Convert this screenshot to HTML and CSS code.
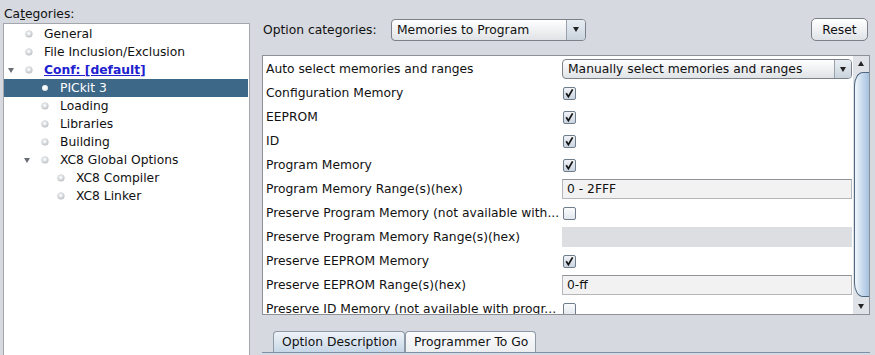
FILE: index.html
```html
<!DOCTYPE html>
<html lang="en">
<head>
    <meta charset="UTF-8">
    <meta name="viewport" content="width=device-width, initial-scale=1.0">
    <title>Project Properties</title>
    <link rel="stylesheet" href="styles.css">
</head>
<body>
    <div class="window">
        <!-- Categories tree -->
        <div class="left-pane">
            <div class="cat-label">Ca<u>t</u>egories:</div>
            <div class="tree">
                <div class="node lvl1"><span class="toggle"></span><span class="bullet"></span><span class="name">General</span></div>
                <div class="node lvl1"><span class="toggle"></span><span class="bullet"></span><span class="name">File Inclusion/Exclusion</span></div>
                <div class="node lvl1"><span class="toggle open"></span><span class="bullet"></span><span class="name link">Conf: [default]</span></div>
                <div class="node lvl2 selected"><span class="toggle"></span><span class="bullet"></span><span class="name">PICkit 3</span></div>
                <div class="node lvl2"><span class="toggle"></span><span class="bullet"></span><span class="name">Loading</span></div>
                <div class="node lvl2"><span class="toggle"></span><span class="bullet"></span><span class="name">Libraries</span></div>
                <div class="node lvl2"><span class="toggle"></span><span class="bullet"></span><span class="name">Building</span></div>
                <div class="node lvl2"><span class="toggle open"></span><span class="bullet"></span><span class="name">XC8 Global Options</span></div>
                <div class="node lvl3"><span class="toggle"></span><span class="bullet"></span><span class="name">XC8 Compiler</span></div>
                <div class="node lvl3"><span class="toggle"></span><span class="bullet"></span><span class="name">XC8 Linker</span></div>
            </div>
        </div>

        <!-- Options -->
        <div class="right-pane">
            <div class="top-bar">
                <span class="opt-label">Option categories:</span>
                <div class="combo cat-combo">
                    <span class="combo-text">Memories to Program</span>
                    <span class="combo-btn"><i class="arrow-down"></i></span>
                </div>
                <button class="reset-btn">Reset</button>
            </div>

            <div class="options">
                <div class="rows">
                    <div class="row">
                        <div class="label">Auto select memories and ranges</div>
                        <div class="value">
                            <div class="combo row-combo">
                                <span class="combo-text">Manually select memories and ranges</span>
                                <span class="combo-btn"><i class="arrow-down"></i></span>
                            </div>
                        </div>
                    </div>
                    <div class="row">
                        <div class="label">Configuration Memory</div>
                        <div class="value"><span class="check checked"><svg viewBox="0 0 13 13"><path d="M2.6 6.2 L5.2 10.2 L10.2 1.6"/></svg></span></div>
                    </div>
                    <div class="row">
                        <div class="label">EEPROM</div>
                        <div class="value"><span class="check checked"><svg viewBox="0 0 13 13"><path d="M2.6 6.2 L5.2 10.2 L10.2 1.6"/></svg></span></div>
                    </div>
                    <div class="row">
                        <div class="label">ID</div>
                        <div class="value"><span class="check checked"><svg viewBox="0 0 13 13"><path d="M2.6 6.2 L5.2 10.2 L10.2 1.6"/></svg></span></div>
                    </div>
                    <div class="row">
                        <div class="label">Program Memory</div>
                        <div class="value"><span class="check checked"><svg viewBox="0 0 13 13"><path d="M2.6 6.2 L5.2 10.2 L10.2 1.6"/></svg></span></div>
                    </div>
                    <div class="row">
                        <div class="label">Program Memory Range(s)(hex)</div>
                        <div class="value"><div class="field">0 - 2FFF</div></div>
                    </div>
                    <div class="row">
                        <div class="label">Preserve Program Memory (not available with...</div>
                        <div class="value"><span class="check"></span></div>
                    </div>
                    <div class="row">
                        <div class="label">Preserve Program Memory Range(s)(hex)</div>
                        <div class="value"><div class="field disabled"></div></div>
                    </div>
                    <div class="row">
                        <div class="label">Preserve EEPROM Memory</div>
                        <div class="value"><span class="check checked"><svg viewBox="0 0 13 13"><path d="M2.6 6.2 L5.2 10.2 L10.2 1.6"/></svg></span></div>
                    </div>
                    <div class="row">
                        <div class="label">Preserve EEPROM Range(s)(hex)</div>
                        <div class="value"><div class="field">0-ff</div></div>
                    </div>
                    <div class="row">
                        <div class="label">Preserve ID Memory (not available with progr...</div>
                        <div class="value"><span class="check"></span></div>
                    </div>
                </div>
                <div class="scrollbar">
                    <div class="sb-btn"><i class="arrow-up"></i></div>
                    <div class="sb-track"><div class="sb-thumb"></div></div>
                    <div class="sb-btn"><i class="arrow-down"></i></div>
                </div>
            </div>

            <div class="tabs">
                <div class="tab active">Option Description</div>
                <div class="tab">Programmer To Go</div>
            </div>
        </div>
    </div>
</body>
</html>
```

FILE: styles.css
```css
body {
    margin: 0;
    padding: 0;
    background: #d6d9df;
    font-family: "DejaVu Sans", Verdana, sans-serif;
    font-size: 12.3px;
    color: #111;
    overflow: hidden;
}

.window {
    display: flex;
    height: 355px;
    overflow: hidden;
}

/* Left pane */
.left-pane {
    width: 250px;
    padding-left: 3px;
    box-sizing: border-box;
    flex-shrink: 0;
    display: flex;
    flex-direction: column;
}

.cat-label {
    padding: 6px 0 0 1px;
    line-height: 16px;
    height: 16px;
}

.cat-label u {
    text-decoration-thickness: 1px;
}

.tree {
    margin-top: 1px;
    flex: 1;
    background: #fff;
    border: 1px solid #a3a6ab;
    border-bottom: none;
    padding-top: 1px;
}

.node {
    display: flex;
    align-items: center;
    height: 18px;
    margin-right: 1px;
}

.node.lvl2 { padding-left: 16px; }
.node.lvl3 { padding-left: 32px; }

.toggle {
    width: 13px;
    display: flex;
    justify-content: center;
    align-items: center;
    flex-shrink: 0;
}

.toggle.open::before {
    content: "";
    border-left: 3px solid transparent;
    border-right: 3px solid transparent;
    border-top: 5px solid #6a6e75;
    margin-top: 1px;
}

.bullet {
    width: 6px;
    height: 6px;
    margin-left: 9px;
    border-radius: 50%;
    background: radial-gradient(circle at 45% 40%, #ffffff 0, #e6e8ea 35%, #9ca1a7 100%);
    box-shadow: 0 0 0 0.5px #b5b9be;
    flex-shrink: 0;
}

.name {
    margin-left: 12px;
    white-space: nowrap;
}

.name.link {
    color: #2020d0;
    font-weight: bold;
    text-decoration: underline;
}

.node.selected {
    background: #3d6887;
    color: #fff;
}

.node.selected .bullet {
    background: radial-gradient(circle at 45% 40%, #ffffff 0, #f0f2f4 50%, #c6ccd2 100%);
    box-shadow: none;
}

/* Right pane */
.right-pane {
    flex: 1;
    padding: 0 5px 0 12px;
    display: flex;
    flex-direction: column;
}

.top-bar {
    display: flex;
    align-items: center;
    margin-top: 18px;
    height: 23px;
}

.opt-label {
    width: 129px;
    padding-left: 1px;
    box-sizing: border-box;
}

.combo {
    display: flex;
    align-items: stretch;
    border: 1px solid #7c8189;
    border-radius: 4px;
    background: linear-gradient(#ffffff, #eceef0 60%, #e0e3e6);
    box-sizing: border-box;
    overflow: hidden;
}

.combo-text {
    flex: 1;
    display: flex;
    align-items: center;
    padding-left: 5px;
    white-space: nowrap;
}

.combo-btn {
    width: 18px;
    border-left: 1px solid #9aa1aa;
    background: linear-gradient(#e9eef3, #c9d3dd);
    display: flex;
    align-items: center;
    justify-content: center;
}

.arrow-down {
    border-left: 3px solid transparent;
    border-right: 3px solid transparent;
    border-top: 5px solid #222;
}

.arrow-up {
    border-left: 3px solid transparent;
    border-right: 3px solid transparent;
    border-bottom: 5px solid #222;
}

.cat-combo {
    width: 195px;
    height: 22px;
}

.reset-btn {
    margin-left: auto;
    margin-right: 2px;
    width: 57px;
    height: 23px;
    font-family: inherit;
    font-size: 12.3px;
    color: #111;
    border: 1px solid #7c8189;
    border-radius: 5px;
    background: linear-gradient(#ffffff, #eef0f2 55%, #dfe2e6);
    padding: 0;
}

/* Options table */
.options {
    margin-top: 14px;
    height: 260px;
    flex-shrink: 0;
    border: 1px solid #8d9096;
    background: #fff;
    display: flex;
    box-sizing: border-box;
    overflow: hidden;
}

.rows {
    flex: 1;
    padding-top: 1px;
}

.row {
    display: flex;
    height: 24px;
    align-items: center;
}

.label {
    width: 298px;
    padding-left: 3px;
    box-sizing: border-box;
    white-space: nowrap;
    overflow: hidden;
}

.value {
    flex: 1;
    padding: 0 1px 0 1px;
    display: flex;
    align-items: center;
}

.row-combo {
    width: 290px;
    height: 20px;
    border-radius: 4px;
}

.row-combo .combo-btn {
    width: 16px;
}

.check {
    width: 13px;
    height: 13px;
    margin-left: 1px;
    border: 1px solid #6f7c8a;
    border-radius: 2px;
    box-sizing: border-box;
    background: linear-gradient(#fafbfc, #e3e8ee);
    display: inline-block;
}

.check.checked {
    background: linear-gradient(#f0f3f7, #c9d4e0);
}

.check svg {
    display: block;
    width: 11px;
    height: 11px;
}

.check svg path {
    fill: none;
    stroke: #111;
    stroke-width: 2;
}

.field {
    width: 290px;
    height: 20px;
    box-sizing: border-box;
    border: 1px solid #b4b6ba;
    border-top-color: #909398;
    background: #f2f2f2;
    padding-left: 4px;
    line-height: 18px;
}

.field.disabled {
    border: none;
    background: #dcdee2;
}

/* Scrollbar */
.scrollbar {
    width: 16px;
    background: #dfe2e7;
    display: flex;
    flex-direction: column;
}

.sb-btn {
    height: 15px;
    display: flex;
    align-items: center;
    justify-content: center;
}

.sb-track {
    flex: 1;
    padding: 1px 0 2px 1px;
}

.sb-thumb {
    height: 100%;
    box-sizing: border-box;
    border: 1px solid #4e6680;
    border-right: none;
    border-radius: 9px 0 0 9px / 14px 0 0 14px;
    background: linear-gradient(to right, #f2f7fc, #c8dbee 50%, #a6c2de);
}

/* Tabs */
.tabs {
    margin-top: 16px;
    display: flex;
    padding-left: 11px;
    border-bottom: 1px solid #7d92a8;
    height: 21px;
    flex-shrink: 0;
}

.tab {
    height: 21px;
    line-height: 21px;
    padding: 0 7px 0 8px;
    border: 1px solid #8e99a6;
    border-bottom: none;
    border-radius: 4px 4px 0 0;
    box-sizing: border-box;
    background: linear-gradient(#fbfbfc, #eceef1);
    white-space: nowrap;
}

.tab.active {
    background: linear-gradient(#eef3f8, #c7d7e7);
}
```
